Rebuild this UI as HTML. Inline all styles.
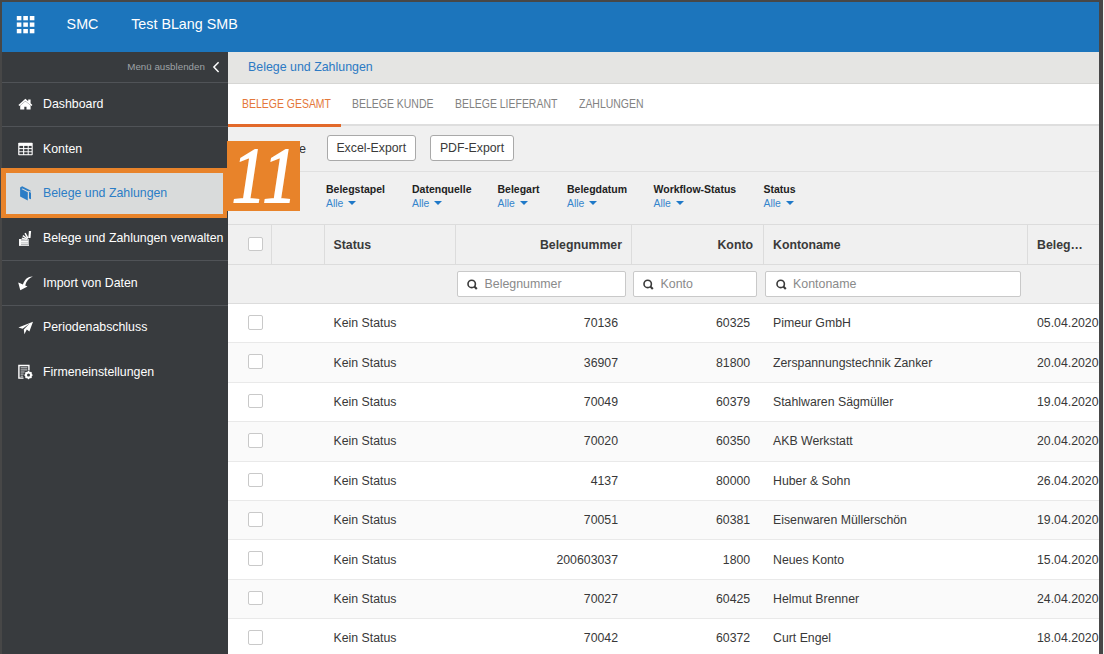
<!DOCTYPE html>
<html><head><meta charset="utf-8">
<style>
*{margin:0;padding:0;box-sizing:border-box}
html,body{width:1104px;height:654px;overflow:hidden;background:#474747;font-family:"Liberation Sans",sans-serif}
.a{position:absolute}
#hdr{left:2px;top:2px;width:1097px;height:49.5px;background:#1c75bc}
#hdr .t{color:#fff;font-size:14.2px;top:16.5px;white-space:nowrap}
#side{left:2px;top:51.5px;width:226px;height:603px;background:#383b3e}
.sl{left:2px;width:226px;height:1px;background:#505357}
.si{color:#fff;font-size:12.35px;left:43px;white-space:nowrap;margin-top:0.8px}
#main{left:228px;top:51.5px;width:871px;height:603px;background:#f0f0f0}
#bc{left:228px;top:51.5px;width:871px;height:32.5px;background:#e5e5e3}
#tabs{left:228px;top:84px;width:871px;height:40px;background:#fff}
.tab{font-size:11.9px;color:#828282;top:96.5px;white-space:nowrap;transform:scaleX(0.88);transform-origin:0 0}
.btn{height:26.3px;border:1px solid #a9a9a9;border-radius:3px;background:#fff;font-size:12.3px;color:#3a3a3a;text-align:center;line-height:25.6px}
.fl{font-size:10.5px;font-weight:bold;color:#222;top:183.2px;white-space:nowrap}
.fa{font-size:10.4px;color:#3585cc;top:198.3px;white-space:nowrap}
.tri{display:inline-block;width:0;height:0;border-left:4.2px solid transparent;border-right:4.2px solid transparent;border-top:4.8px solid #1f79c8;margin-left:5px;vertical-align:2.2px}
.vl{width:1px;background:#dcdcdc}
.hl{height:1px;background:#dcdcdc}
.ht{font-size:12.3px;font-weight:bold;color:#3a3a3a;top:238px;white-space:nowrap}
.inp{height:25.8px;top:270.9px;background:#fff;border:1px solid #c9c9c9;border-radius:2px;font-size:12.4px;color:#8a8a8a;line-height:24.2px;padding-left:27px;white-space:nowrap}
.cb{width:14.5px;height:14.5px;border:1px solid #c9c9c9;border-radius:2px;background:#fff}
.row{left:228px;width:871px;height:39.4px}
.rt{font-size:12.3px;color:#383838;white-space:nowrap}
</style></head><body>
<div class="a" id="hdr"></div>
<div class="a" style="left:1103px;top:0;width:1px;height:654px;background:#f4f4f4"></div>
<!-- grid icon -->
<svg class="a" style="left:0;top:0" width="60" height="50" viewBox="0 0 60 50"><g fill="#fff"><rect x="16.8" y="16.0" width="4.6" height="4.3"/><rect x="23.3" y="16.0" width="4.6" height="4.3"/><rect x="29.8" y="16.0" width="4.6" height="4.3"/><rect x="16.8" y="22.5" width="4.6" height="4.3"/><rect x="23.3" y="22.5" width="4.6" height="4.3"/><rect x="29.8" y="22.5" width="4.6" height="4.3"/><rect x="16.8" y="29.0" width="4.6" height="4.3"/><rect x="23.3" y="29.0" width="4.6" height="4.3"/><rect x="29.8" y="29.0" width="4.6" height="4.3"/></g></svg>
<div class="a t" style="left:66.6px;color:#fff;font-size:14.3px;top:15.8px;white-space:nowrap">SMC</div>
<div class="a t" style="left:131.2px;color:#fff;font-size:14.3px;top:15.8px;white-space:nowrap">Test BLang SMB</div>

<div class="a" id="side"></div>
<div class="a" style="left:127.3px;top:60.8px;font-size:9.75px;color:#9ea2a6;white-space:nowrap">Menü ausblenden</div>
<svg class="a" style="left:211px;top:61px" width="10" height="12" viewBox="0 0 10 12"><path d="M7.6 1.3 L2.9 6.1 L7.6 10.9" fill="none" stroke="#fff" stroke-width="1.5"/></svg>
<div class="a sl" style="top:82px"></div>
<div class="a sl" style="top:126px"></div>
<div class="a sl" style="top:260px"></div>
<div class="a sl" style="top:304.5px"></div>

<div class="a si" style="top:96px">Dashboard</div>
<div class="a si" style="top:141px">Konten</div>
<div class="a" style="left:1px;top:167.8px;width:226.3px;height:50px;border:solid #e8832a;border-width:5px 4px 4.2px 5px;background:#d9dbdb"></div>
<div class="a si" style="top:185.5px;color:#2b7dc6">Belege und Zahlungen</div>
<div class="a si" style="top:230px">Belege und Zahlungen verwalten</div>
<div class="a si" style="top:275px">Import von Daten</div>
<div class="a si" style="top:319.5px">Periodenabschluss</div>
<div class="a si" style="top:364px">Firmeneinstellungen</div>

<!-- sidebar icons -->
<svg class="a" style="left:0;top:0" width="40" height="390" viewBox="0 0 40 390">
<g fill="#fff">
<path d="M18.4 104.9 L25.4 98.8 L28.2 101.2 L28.2 99.4 L30.6 99.4 L30.6 103.3 L32.4 104.9 L31.3 105.9 L25.4 100.9 L19.5 105.9 Z"/>
<path d="M20.2 105.4 L25.4 101.2 L30.6 105.4 L30.6 109.6 L26.5 109.6 L26.5 106.8 L24.3 106.8 L24.3 109.6 L20.2 109.6 Z"/>
</g>
<g>
<rect x="18.2" y="142.7" width="14.5" height="12.6" rx="0.8" fill="#fff"/>
<g fill="#3a3d40">
<rect x="19.4" y="145.9" width="3.7" height="2.2"/><rect x="24.2" y="145.9" width="3.5" height="2.2"/><rect x="28.7" y="145.9" width="2.9" height="2.2"/>
<rect x="19.4" y="149.1" width="3.7" height="2.2"/><rect x="24.2" y="149.1" width="3.5" height="2.2"/><rect x="28.7" y="149.1" width="2.9" height="2.2"/>
<rect x="19.4" y="152.2" width="3.7" height="2.0"/><rect x="24.2" y="152.2" width="3.5" height="2.0"/><rect x="28.7" y="152.2" width="2.9" height="2.0"/>
</g></g>
<g fill="#2b7dc6">
<path d="M20.1 187.6 L22.2 186.2 L30.6 190.4 L30.6 191.8 L28.6 190.8 L28.6 191.6 L22.6 188.6 L21.4 189 L27.8 192.2 L27.8 200.4 L20.1 196.6 Z"/>
<path d="M29.0 191.8 L31.0 192.8 L31.0 199.3 L29.0 198.4 Z"/>
</g>
<g fill="#fff">
<rect x="19.1" y="239" width="9.9" height="6.9" fill="#b5b7b9"/>
<rect x="19.1" y="239" width="1.8" height="6.9"/>
<rect x="20.9" y="240.8" width="7.2" height="1.1"/><rect x="20.9" y="242.6" width="7.2" height="1"/>
<rect x="19.1" y="245" width="9.9" height="0.9" fill="#e0e0e0"/>
<g stroke="#fff" stroke-linecap="butt">
<line x1="26.8" y1="239.4" x2="21.8" y2="238.2" stroke-width="1.3"/>
<line x1="27.3" y1="238.8" x2="22.8" y2="235.6" stroke-width="1.4"/>
<line x1="27.9" y1="238.3" x2="25.1" y2="233.2" stroke-width="1.5"/>
<line x1="29.4" y1="238" x2="30" y2="231" stroke-width="2.2"/>
</g>
</g>
<g fill="#fff">
<path d="M32.8 276.6 C28 276.4 24.6 279.4 22.9 284.6 L20.2 283.2 L18.2 282.5 L20.3 290.2 L27.5 286.5 L25.2 285.6 C26.2 281.2 28.8 278.4 32.8 276.6 Z"/>
</g>
<g fill="#fff">
<path d="M18.4 327.6 L33 321.8 L29.4 331.6 L26.8 329.6 L24.4 334.2 L23.8 329.4 L29.6 323.6 L22.6 328.8 Z"/>
</g>
<g>
<path d="M18.2 364.8 L29.6 364.8 L29.6 370.5 L28.2 370.5 L28.2 366.2 L19.6 366.2 L19.6 377.4 L23.5 377.4 L23.5 378.8 L18.2 378.8 Z" fill="#fff"/>
<g fill="#cfd2d4"><rect x="20.6" y="367.3" width="6.8" height="1"/><rect x="20.6" y="369.4" width="6.8" height="1"/><rect x="20.6" y="371.5" width="4" height="1"/><rect x="20.6" y="373.6" width="3" height="1"/><rect x="20.6" y="375.7" width="2.5" height="1"/></g>
<circle cx="28.5" cy="375.1" r="3.2" fill="#383b3e"/>
<circle cx="28.5" cy="375.1" r="2.6" fill="none" stroke="#fff" stroke-width="1.9"/>
<g stroke="#fff" stroke-width="1.3"><line x1="28.5" y1="371" x2="28.5" y2="379.2"/><line x1="24.4" y1="375.1" x2="32.6" y2="375.1"/><line x1="25.6" y1="372.2" x2="31.4" y2="378"/><line x1="25.6" y1="378" x2="31.4" y2="372.2"/></g>
<circle cx="28.5" cy="375.1" r="1.5" fill="#383b3e"/>
</g>
</svg>
<!-- main -->
<div class="a" id="main"></div>
<div class="a" id="bc"></div>
<div class="a" style="left:248px;top:60px;font-size:12.4px;color:#2c7ac4;white-space:nowrap">Belege und Zahlungen</div>
<div class="a" id="tabs"></div>
<div class="a" style="left:228px;top:83px;width:871px;height:1px;background:#d6d6d4"></div>
<div class="a tab" style="left:241.5px;color:#e4773a">BELEGE GESAMT</div>
<div class="a tab" style="left:352px">BELEGE KUNDE</div>
<div class="a tab" style="left:455px">BELEGE LIEFERANT</div>
<div class="a tab" style="left:579px">ZAHLUNGEN</div>
<div class="a" style="left:228px;top:124px;width:871px;height:2px;background:#dedede"></div>
<div class="a" style="left:228px;top:124px;width:113px;height:2.5px;background:#e2692a"></div>

<div class="a" style="left:200px;width:106px;text-align:right;top:141.5px;font-size:12.6px;color:#333">Spalte</div>
<div class="a btn" style="left:327px;top:135px;width:88.5px">Excel-Export</div>
<div class="a btn" style="left:430px;top:135px;width:84px">PDF-Export</div>
<div class="a hl" style="left:228px;top:171px;width:871px;background:#e0e0e0"></div>

<div class="a fl" style="left:326px">Belegstapel</div><div class="a fa" style="left:326px">Alle<span class="tri"></span></div>
<div class="a fl" style="left:412px">Datenquelle</div><div class="a fa" style="left:412px">Alle<span class="tri"></span></div>
<div class="a fl" style="left:497.5px">Belegart</div><div class="a fa" style="left:497.5px">Alle<span class="tri"></span></div>
<div class="a fl" style="left:567px">Belegdatum</div><div class="a fa" style="left:567px">Alle<span class="tri"></span></div>
<div class="a fl" style="left:653.5px">Workflow-Status</div><div class="a fa" style="left:653.5px">Alle<span class="tri"></span></div>
<div class="a fl" style="left:763.5px">Status</div><div class="a fa" style="left:763.5px">Alle<span class="tri"></span></div>

<!-- table header -->
<div class="a hl" style="left:228px;top:224px;width:871px"></div>
<div class="a hl" style="left:228px;top:263.5px;width:871px"></div>
<div class="a hl" style="left:228px;top:303px;width:871px"></div>
<div class="a vl" style="left:271px;top:224px;height:40px"></div>
<div class="a vl" style="left:324px;top:224px;height:40px"></div>
<div class="a vl" style="left:455px;top:224px;height:40px"></div>
<div class="a vl" style="left:631px;top:224px;height:40px"></div>
<div class="a vl" style="left:763px;top:224px;height:40px"></div>
<div class="a vl" style="left:1026.8px;top:224px;height:40px"></div>
<div class="a cb" style="left:248px;top:236.5px"></div>
<div class="a ht" style="left:333.5px">Status</div>
<div class="a ht" style="left:455px;width:167px;text-align:right">Belegnummer</div>
<div class="a ht" style="left:631px;width:122px;text-align:right">Konto</div>
<div class="a ht" style="left:773px">Kontoname</div>
<div class="a ht" style="left:1037px">Beleg…</div>

<div class="a inp" style="left:456.5px;width:169.5px">Belegnummer</div>
<div class="a inp" style="left:632.5px;width:124px">Konto</div>
<div class="a inp" style="left:765px;width:255.5px">Kontoname</div>

<svg class="a" style="left:467px;top:279px" width="12" height="12" viewBox="0 0 12 12"><circle cx="4.7" cy="4.9" r="3.7" fill="none" stroke="#3a3a3a" stroke-width="1.6"/><line x1="7.4" y1="7.6" x2="9.8" y2="10" stroke="#3a3a3a" stroke-width="2.1"/></svg>
<svg class="a" style="left:643px;top:279px" width="12" height="12" viewBox="0 0 12 12"><circle cx="4.7" cy="4.9" r="3.7" fill="none" stroke="#3a3a3a" stroke-width="1.6"/><line x1="7.4" y1="7.6" x2="9.8" y2="10" stroke="#3a3a3a" stroke-width="2.1"/></svg>
<svg class="a" style="left:776px;top:279px" width="12" height="12" viewBox="0 0 12 12"><circle cx="4.7" cy="4.9" r="3.7" fill="none" stroke="#3a3a3a" stroke-width="1.6"/><line x1="7.4" y1="7.6" x2="9.8" y2="10" stroke="#3a3a3a" stroke-width="2.1"/></svg>
<div id="rows">
<div class="a row" style="top:303.50px;background:#fff"></div>
<div class="a row" style="top:342.90px;background:#fafafa"></div>
<div class="a row" style="top:382.30px;background:#fff"></div>
<div class="a row" style="top:421.70px;background:#fafafa"></div>
<div class="a row" style="top:461.10px;background:#fff"></div>
<div class="a row" style="top:500.50px;background:#fafafa"></div>
<div class="a row" style="top:539.90px;background:#fff"></div>
<div class="a row" style="top:579.30px;background:#fafafa"></div>
<div class="a row" style="top:618.70px;background:#fff"></div>
<div class="a hl" style="left:228px;top:342.30px;width:871px;background:#e9e9e9"></div>
<div class="a hl" style="left:228px;top:381.70px;width:871px;background:#e9e9e9"></div>
<div class="a hl" style="left:228px;top:421.10px;width:871px;background:#e9e9e9"></div>
<div class="a hl" style="left:228px;top:460.50px;width:871px;background:#e9e9e9"></div>
<div class="a hl" style="left:228px;top:499.90px;width:871px;background:#e9e9e9"></div>
<div class="a hl" style="left:228px;top:539.30px;width:871px;background:#e9e9e9"></div>
<div class="a hl" style="left:228px;top:578.70px;width:871px;background:#e9e9e9"></div>
<div class="a hl" style="left:228px;top:618.10px;width:871px;background:#e9e9e9"></div>
<div class="a hl" style="left:228px;top:657.50px;width:871px;background:#e9e9e9"></div>
<div class="a cb" style="left:248px;top:315.00px"></div>
<div class="a rt" style="left:333.5px;top:316.20px">Kein Status</div>
<div class="a rt" style="left:455px;width:163px;text-align:right;top:316.20px">70136</div>
<div class="a rt" style="left:631px;width:119.2px;text-align:right;top:316.20px">60325</div>
<div class="a rt" style="left:773px;top:316.20px">Pimeur GmbH</div>
<div class="a rt" style="left:1037px;top:316.20px">05.04.2020</div>
<div class="a cb" style="left:248px;top:354.40px"></div>
<div class="a rt" style="left:333.5px;top:355.60px">Kein Status</div>
<div class="a rt" style="left:455px;width:163px;text-align:right;top:355.60px">36907</div>
<div class="a rt" style="left:631px;width:119.2px;text-align:right;top:355.60px">81800</div>
<div class="a rt" style="left:773px;top:355.60px">Zerspannungstechnik Zanker</div>
<div class="a rt" style="left:1037px;top:355.60px">20.04.2020</div>
<div class="a cb" style="left:248px;top:393.80px"></div>
<div class="a rt" style="left:333.5px;top:395.00px">Kein Status</div>
<div class="a rt" style="left:455px;width:163px;text-align:right;top:395.00px">70049</div>
<div class="a rt" style="left:631px;width:119.2px;text-align:right;top:395.00px">60379</div>
<div class="a rt" style="left:773px;top:395.00px">Stahlwaren Sägmüller</div>
<div class="a rt" style="left:1037px;top:395.00px">19.04.2020</div>
<div class="a cb" style="left:248px;top:433.20px"></div>
<div class="a rt" style="left:333.5px;top:434.40px">Kein Status</div>
<div class="a rt" style="left:455px;width:163px;text-align:right;top:434.40px">70020</div>
<div class="a rt" style="left:631px;width:119.2px;text-align:right;top:434.40px">60350</div>
<div class="a rt" style="left:773px;top:434.40px">AKB Werkstatt</div>
<div class="a rt" style="left:1037px;top:434.40px">20.04.2020</div>
<div class="a cb" style="left:248px;top:472.60px"></div>
<div class="a rt" style="left:333.5px;top:473.80px">Kein Status</div>
<div class="a rt" style="left:455px;width:163px;text-align:right;top:473.80px">4137</div>
<div class="a rt" style="left:631px;width:119.2px;text-align:right;top:473.80px">80000</div>
<div class="a rt" style="left:773px;top:473.80px">Huber &amp; Sohn</div>
<div class="a rt" style="left:1037px;top:473.80px">26.04.2020</div>
<div class="a cb" style="left:248px;top:512.00px"></div>
<div class="a rt" style="left:333.5px;top:513.20px">Kein Status</div>
<div class="a rt" style="left:455px;width:163px;text-align:right;top:513.20px">70051</div>
<div class="a rt" style="left:631px;width:119.2px;text-align:right;top:513.20px">60381</div>
<div class="a rt" style="left:773px;top:513.20px">Eisenwaren Müllerschön</div>
<div class="a rt" style="left:1037px;top:513.20px">19.04.2020</div>
<div class="a cb" style="left:248px;top:551.40px"></div>
<div class="a rt" style="left:333.5px;top:552.60px">Kein Status</div>
<div class="a rt" style="left:455px;width:163px;text-align:right;top:552.60px">200603037</div>
<div class="a rt" style="left:631px;width:119.2px;text-align:right;top:552.60px">1800</div>
<div class="a rt" style="left:773px;top:552.60px">Neues Konto</div>
<div class="a rt" style="left:1037px;top:552.60px">15.04.2020</div>
<div class="a cb" style="left:248px;top:590.80px"></div>
<div class="a rt" style="left:333.5px;top:592.00px">Kein Status</div>
<div class="a rt" style="left:455px;width:163px;text-align:right;top:592.00px">70027</div>
<div class="a rt" style="left:631px;width:119.2px;text-align:right;top:592.00px">60425</div>
<div class="a rt" style="left:773px;top:592.00px">Helmut Brenner</div>
<div class="a rt" style="left:1037px;top:592.00px">24.04.2020</div>
<div class="a cb" style="left:248px;top:630.20px"></div>
<div class="a rt" style="left:333.5px;top:631.40px">Kein Status</div>
<div class="a rt" style="left:455px;width:163px;text-align:right;top:631.40px">70042</div>
<div class="a rt" style="left:631px;width:119.2px;text-align:right;top:631.40px">60372</div>
<div class="a rt" style="left:773px;top:631.40px">Curt Engel</div>
<div class="a rt" style="left:1037px;top:631.40px">18.04.2020</div>
</div>
<!-- badge -->
<div class="a" style="left:226.5px;top:141px;width:73.3px;height:69.7px;background:#e8832a"></div>
<div class="a" style="left:232.3px;top:136.3px;width:80px;letter-spacing:2.6px;font-family:'Liberation Serif',serif;font-style:italic;font-size:78px;line-height:1;color:#fff;-webkit-text-stroke:2px #fff;white-space:nowrap;transform:scaleX(0.86);transform-origin:0 0">11</div>
</body></html>
